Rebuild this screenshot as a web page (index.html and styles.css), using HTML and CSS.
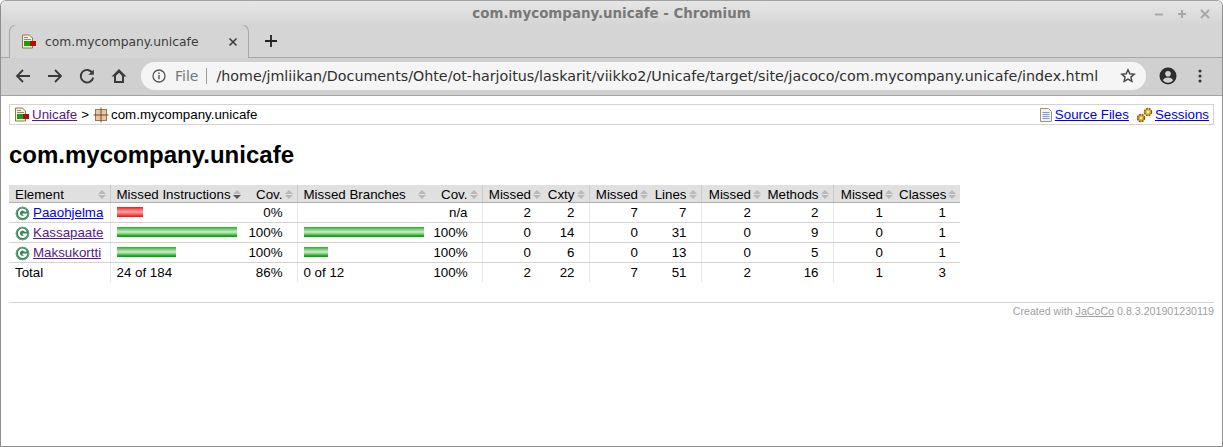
FILE: index.html
```html
<!DOCTYPE html>
<html lang="en">
<head>
<meta charset="utf-8">
<title>com.mycompany.unicafe</title>
<link rel="stylesheet" href="styles.css">
</head>
<body>
<div class="window">
  <header class="chrome">
    <div class="titlebar">
      <span class="title">com.mycompany.unicafe - Chromium</span>
      <div class="winbtns">
        <svg width="12" height="12" viewBox="0 0 12 12"><path d="M2 6.500h8" stroke="#a8a8a8" stroke-width="2"/></svg>
        <svg width="12" height="12" viewBox="0 0 12 12"><path d="M2 6h8M6 2v8" stroke="#a8a8a8" stroke-width="2"/></svg>
        <svg width="12" height="12" viewBox="0 0 12 12"><path d="M2 2l8 8M10 2l-8 8" stroke="#a8a8a8" stroke-width="2"/></svg>
      </div>
    </div>
    <div class="tabstrip">
      <div class="tab">
        <svg class="ico16" width="16" height="16" viewBox="0 0 16 16"><use href="#report"/></svg>
        <span class="tabtitle">com.mycompany.unicafe</span>
        <svg class="tabclose" width="10" height="10" viewBox="0 0 10 10"><path d="M1.500 1.500l7 7M8.500 1.500l-7 7" stroke="#3c3c3c" stroke-width="1.600"/></svg>
      </div>
      <svg class="newtab" width="14" height="14" viewBox="0 0 14 14"><path d="M7 1v12M1 7h12" stroke="#222" stroke-width="1.800"/></svg>
    </div>
    <div class="toolbar">
      <svg class="tool" width="18" height="18" viewBox="0 0 18 18"><path d="M16 9H3M9 3L3 9l6 6" fill="none" stroke="#3a3a3a" stroke-width="1.800"/></svg>
      <svg class="tool" width="18" height="18" viewBox="0 0 18 18"><path d="M2 9h13M9 3l6 6-6 6" fill="none" stroke="#3a3a3a" stroke-width="1.800"/></svg>
      <svg class="tool" width="18" height="18" viewBox="0 0 18 18"><path d="M14.600 6.200A6.300 6.300 0 1 0 15.200 10.500" fill="none" stroke="#3a3a3a" stroke-width="1.900"/><path d="M15.800 2.400v5.400h-5.400z" fill="#3a3a3a"/></svg>
      <svg class="tool" width="18" height="18" viewBox="0 0 18 18"><path d="M9 2L1.500 9.500H4V16h10V9.500h2.500zM6 14V8.700l3-3 3 3V14z" fill="#3a3a3a" fill-rule="evenodd"/></svg>
      <div class="omnibox">
        <svg class="info" width="14" height="14" viewBox="0 0 14 14"><circle cx="7" cy="7" r="6" fill="none" stroke="#555" stroke-width="1.300"/><path d="M7 6v4.200M7 3.500v1.400" stroke="#555" stroke-width="1.400"/></svg>
        <span class="scheme">File</span>
        <span class="sep"></span>
        <span class="url">/home/jmliikan/Documents/Ohte/ot-harjoitus/laskarit/viikko2/Unicafe/target/site/jacoco/com.mycompany.unicafe/index.html</span>
        <svg class="star" width="16" height="16" viewBox="0 0 16 16"><path d="M8 1.800l1.800 4 4.400.4-3.300 2.900 1 4.300L8 11.100l-3.900 2.300 1-4.300-3.300-2.900 4.400-.4z" fill="none" stroke="#444" stroke-width="1.400"/></svg>
      </div>
      <svg class="avatar" width="18" height="18" viewBox="0 0 18 18"><circle cx="9" cy="9" r="8.500" fill="#2c2c2c"/><circle cx="9" cy="6.800" r="2.800" fill="#d0d0d0"/><path d="M3.800 13.300c1-2.200 3.200-2.900 5.200-2.900s4.200.7 5.200 2.900A6.600 6.600 0 0 1 9 15.800a6.600 6.600 0 0 1-5.200-2.500z" fill="#d0d0d0"/></svg>
      <svg class="menu" width="4" height="14" viewBox="0 0 4 14"><circle cx="2" cy="2" r="1.500" fill="#333"/><circle cx="2" cy="7" r="1.500" fill="#333"/><circle cx="2" cy="12" r="1.500" fill="#333"/></svg>
    </div>
  </header>

  <main class="page">
    <div class="breadcrumb">
      <div class="crumbs">
        <svg class="ico16" width="16" height="16" viewBox="0 0 16 16"><use href="#report"/></svg>
        <a class="visited" href="#">Unicafe</a>
        <span class="gt">&gt;</span>
        <svg class="pkg" width="16" height="16" viewBox="0 0 16 16"><rect x="2.500" y="2.500" width="11" height="11" fill="#e4c8a4" stroke="#a0754c"/><path d="M8 .5v15M.5 8h15" stroke="#6e4a2a"/></svg>
        <span>com.mycompany.unicafe</span>
      </div>
      <div class="infos">
        <svg class="ico16" width="16" height="16" viewBox="0 0 16 16"><path d="M2.500 1.500h8l3 3v10h-11z" fill="#eef2fa" stroke="#a89468"/><path d="M4.500 5.500h7M4.500 7.500h7M4.500 9.500h7M4.500 11.500h7" stroke="#7d99cf"/></svg>
        <a href="#">Source Files</a>
        <svg class="ico16 gears" width="18" height="16" viewBox="0 0 18 16"><g fill="none" stroke="#8a5a10"><circle cx="5" cy="11" r="3.500" fill="#e8a82c" stroke-dasharray="2 .8" stroke-width="1.600"/><circle cx="12" cy="5" r="3.500" fill="#e8b83c" stroke-dasharray="2 .8" stroke-width="1.600"/></g><circle cx="5" cy="11" r="1.200" fill="#fff3c8"/><circle cx="12" cy="5" r="1.200" fill="#fff3c8"/></svg>
        <a href="#">Sessions</a>
      </div>
    </div>

    <h1 class="heading">com.mycompany.unicafe</h1>

    <table class="coverage">
      <colgroup>
        <col class="w101"><col class="w135"><col class="w52"><col class="w133"><col class="w52">
        <col class="w63"><col class="w44"><col class="w63"><col class="w49">
        <col class="w64"><col class="w68"><col class="w64"><col class="w63">
      </colgroup>
      <thead>
        <tr>
          <td class="sortable">Element</td>
          <td class="bar sortable desc">Missed Instructions</td>
          <td class="ctr2 sortable">Cov.</td>
          <td class="bar sortable">Missed Branches</td>
          <td class="ctr2 sortable">Cov.</td>
          <td class="ctr1 sortable">Missed</td>
          <td class="ctr2 sortable">Cxty</td>
          <td class="ctr1 sortable">Missed</td>
          <td class="ctr2 sortable">Lines</td>
          <td class="ctr1 sortable">Missed</td>
          <td class="ctr2 sortable">Methods</td>
          <td class="ctr1 sortable">Missed</td>
          <td class="ctr2 sortable">Classes</td>
        </tr>
      </thead>
      <tbody>
        <tr>
          <td><svg class="cls" width="16" height="16" viewBox="0 0 16 16"><use href="#class"/></svg><a href="#">Paaohjelma</a></td>
          <td class="bar"><span class="meter red" style="width:26px"></span></td>
          <td class="ctr2">0%</td>
          <td class="bar"></td>
          <td class="ctr2">n/a</td>
          <td class="ctr1">2</td><td class="ctr2">2</td>
          <td class="ctr1">7</td><td class="ctr2">7</td>
          <td class="ctr1">2</td><td class="ctr2">2</td>
          <td class="ctr1">1</td><td class="ctr2">1</td>
        </tr>
        <tr>
          <td><svg class="cls" width="16" height="16" viewBox="0 0 16 16"><use href="#class"/></svg><a class="visited" href="#">Kassapaate</a></td>
          <td class="bar"><span class="meter green" style="width:120px"></span></td>
          <td class="ctr2">100%</td>
          <td class="bar"><span class="meter green" style="width:120px"></span></td>
          <td class="ctr2">100%</td>
          <td class="ctr1">0</td><td class="ctr2">14</td>
          <td class="ctr1">0</td><td class="ctr2">31</td>
          <td class="ctr1">0</td><td class="ctr2">9</td>
          <td class="ctr1">0</td><td class="ctr2">1</td>
        </tr>
        <tr>
          <td><svg class="cls" width="16" height="16" viewBox="0 0 16 16"><use href="#class"/></svg><a class="visited" href="#">Maksukortti</a></td>
          <td class="bar"><span class="meter green" style="width:59px"></span></td>
          <td class="ctr2">100%</td>
          <td class="bar"><span class="meter green" style="width:24px"></span></td>
          <td class="ctr2">100%</td>
          <td class="ctr1">0</td><td class="ctr2">6</td>
          <td class="ctr1">0</td><td class="ctr2">13</td>
          <td class="ctr1">0</td><td class="ctr2">5</td>
          <td class="ctr1">0</td><td class="ctr2">1</td>
        </tr>
      </tbody>
      <tfoot>
        <tr>
          <td>Total</td>
          <td class="bar">24 of 184</td>
          <td class="ctr2">86%</td>
          <td class="bar">0 of 12</td>
          <td class="ctr2">100%</td>
          <td class="ctr1">2</td><td class="ctr2">22</td>
          <td class="ctr1">7</td><td class="ctr2">51</td>
          <td class="ctr1">2</td><td class="ctr2">16</td>
          <td class="ctr1">1</td><td class="ctr2">3</td>
        </tr>
      </tfoot>
    </table>

    <div class="footer">Created with <a href="#">JaCoCo</a> 0.8.3.201901230119</div>
  </main>
</div>

<svg class="defs" width="0" height="0" aria-hidden="true">
  <symbol id="report" viewBox="0 0 16 16">
    <path d="M.5 1h7l3 3v10h-10z" fill="#f4eeda" stroke="#8e7a44"/>
    <path d="M2 3.500h4M2 5.500h7" stroke="#8a8a8a"/>
    <rect x="2" y="7" width="6" height="5" fill="#12a012"/>
    <rect x="8" y="7" width="6" height="5" fill="#b80c0c"/>
  </symbol>
  <symbol id="class" viewBox="0 0 16 16">
    <circle cx="7.500" cy="7.500" r="6.800" fill="#37875a"/>
    <circle cx="7.500" cy="7.500" r="6.300" fill="none" stroke="#6fa988"/>
    <path d="M10.900 5.600A3.700 3.700 0 1 0 11.100 8.600H7.600" fill="none" stroke="#fff" stroke-width="2"/>
  </symbol>
</svg>
</body>
</html>
```
FILE: styles.css
```css
* { box-sizing: border-box; }
html, body { margin: 0; height: 100%; overflow: hidden; background: #fff; }
body { font-family: "Liberation Sans", Arial, sans-serif; font-size: 13.333px; color: #000; }
a { color: #0000ee; }
a.visited { color: #551a8b; }
svg { display: block; flex: none; }
.defs { position: absolute; }

.window { height: 447px; border: 1px solid #8e8e8e; border-top-color: #a0a0a0; border-radius: 6px 6px 0 0; overflow: hidden; display: flex; flex-direction: column; }

.chrome { flex: none; font-family: "DejaVu Sans", sans-serif; }
.titlebar { height: 24px; position: relative; display: flex; align-items: center; justify-content: center; background: linear-gradient(#e6e6e6, #d5d5d5); }
.title { font-size: 13.4px; font-weight: 700; color: #787878; }
.winbtns { position: absolute; right: 11px; top: 7px; display: flex; gap: 11px; }

.tabstrip { height: 33px; display: flex; align-items: center; background: #d5d5d5; padding-left: 8px; border-bottom: 1px solid #a8a8a8; }
.tab { width: 240px; height: 34px; margin-top: -1px; margin-bottom: -1px; background: #d5d5d5; border: 1px solid #a8a8a8; border-bottom: 0; border-radius: 8px 8px 0 0; display: flex; align-items: center; padding: 0 10px 0 12px; }
.tabtitle { font-size: 12.3px; color: #3c3c3c; margin-left: 7px; flex: 1; }
.newtab { margin-left: 15px; }

.toolbar { height: 38px; background: #d0d0d0; border-bottom: 1px solid #a4a4a4; display: flex; align-items: center; padding: 0 13px 1px; }
.tool { margin-right: 14px; }
.omnibox { width: 1005px; height: 28px; margin-left: -1px; background: #f5f5f5; border-radius: 14px; display: flex; align-items: center; padding: 0 10px 0 11px; }
.info { margin-right: 9px; }
.scheme { font-size: 14px; color: #777; }
.sep { width: 1px; height: 16px; background: #999; margin: 0 9px 0 8px; }
.url { font-size: 14.28px; color: #2e2e2e; flex: 1; white-space: nowrap; }
.avatar { margin-left: 13px; }
.menu { margin-left: 21px; }

.page { flex: 1; padding: 8px; }
.breadcrumb { height: 21px; border: 1px solid #d6d3ce; display: flex; align-items: center; justify-content: space-between; padding: 0 4px 0 5px; }
.crumbs, .infos { display: flex; align-items: center; }
.crumbs a { margin-left: 1px; }
.gt { margin: 0 4px; }
.pkg { margin-right: 2px; }
.infos a { margin-left: 1px; }
.gears { margin-left: 7px; }

.heading { font-size: 24px; font-weight: 700; margin: 16px 0; line-height: 28px; }

.coverage { border-collapse: collapse; empty-cells: show; table-layout: fixed; width: 951px; }
.w44 { width: 44px; } .w49 { width: 49px; } .w52 { width: 52px; }
.w63 { width: 63px; } .w64 { width: 64px; } .w68 { width: 68px; }
.w101 { width: 101px; } .w133 { width: 133px; } .w135 { width: 135px; }
.coverage td { white-space: nowrap; padding: 2px 6px; border-bottom: 1px solid #d6d3ce; line-height: 15px; height: 20px; vertical-align: top; }
.coverage thead td { padding: 2px 14px 0 6px; background: #e0e0e0; border-bottom: 1px solid #b0b0b0; height: 17px; position: relative; }
.coverage tfoot td { border-bottom: 0; height: 19px; }
.coverage td.bar { border-left: 1px solid #e8e8e8; }
.coverage thead td.bar, .coverage thead td.ctr1 { border-left: 1px solid #ccc; }
.coverage td.ctr1 { text-align: right; padding-right: 14px; border-left: 1px solid #e8e8e8; }
.coverage td.ctr2 { text-align: right; padding-right: 14px; padding-left: 2px; }

.sortable::before, .sortable::after { content: ""; position: absolute; right: 4px; width: 0; height: 0; border-left: 4px solid transparent; border-right: 4px solid transparent; }
.sortable::before { top: 5px; border-bottom: 4px solid #b8b8b8; }
.sortable::after { top: 10px; border-top: 4px solid #b8b8b8; }
.sortable.desc::after { border-top-color: #555; }

.cls { display: inline-block; vertical-align: -3px; margin: -2px 2px -2px 0; }
.meter { display: block; height: 10px; margin-top: 2px; }
.green { background: linear-gradient(#22b022 0, #90d490 3px, #d0ecd0 5px, #78c878 7px, #0aa50a 9px); }
.red { background: linear-gradient(#f01818 0, #ff7070 3px, #ffa8a8 5px, #ff6060 7px, #f01010 10px); }

.footer { margin-top: 20px; border-top: 1px solid #d6d3ce; padding-top: 2px; text-align: right; font-size: 10.667px; color: #a0a0a0; }
.footer a { color: #a0a0a0; }
```
